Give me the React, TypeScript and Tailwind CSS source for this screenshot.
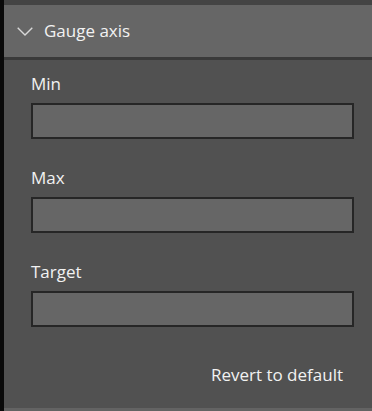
import React from "react";

function Field({ label }: { label: string }) {
  return (
    <div className="flex flex-col">
      <div className="h-[20px] text-[17px] leading-[20px] text-[#f2f2f2]">{label}</div>
      <div className="mt-[9px] h-[36px] border-2 border-[#262626] bg-[#666666]" />
    </div>
  );
}

export default function App() {
  return (
    <div
      className="w-[372px] h-[411px] flex flex-col bg-[#515151] border-l-4 border-[#0a0a0a] overflow-hidden"
      style={{ fontFamily: '"Open Sans", "Noto Sans", sans-serif' }}
    >
      <div className="h-[5px] bg-[#444444] shrink-0" />
      <div className="h-[52px] bg-[#666666] flex items-center pl-[13px] shrink-0">
        <svg width="16" height="9" viewBox="0 0 16 9" fill="none" className="mt-[1px]">
          <path d="M0.7 0.7 L8 8 L15.3 0.7" stroke="#d8d8d8" strokeWidth="1.4" />
        </svg>
        <span className="ml-[11px] text-[17px] text-[#f2f2f2] leading-[20px]">Gauge axis</span>
      </div>
      <div className="h-[3px] bg-[#3a3a3a] shrink-0" />
      <div className="flex-1 flex flex-col pl-[27px] pr-[18px] pt-[14px]">
        <div className="flex flex-col gap-[29px]">
          <Field label="Min" />
          <Field label="Max" />
          <Field label="Target" />
        </div>
        <div className="mt-[38px] flex justify-end pr-[11px]">
          <span className="text-[17px] text-[#f2f2f2] leading-[20px]">Revert to default</span>
        </div>
      </div>
      <div className="h-[3px] bg-[#636363] shrink-0" />
    </div>
  );
}
